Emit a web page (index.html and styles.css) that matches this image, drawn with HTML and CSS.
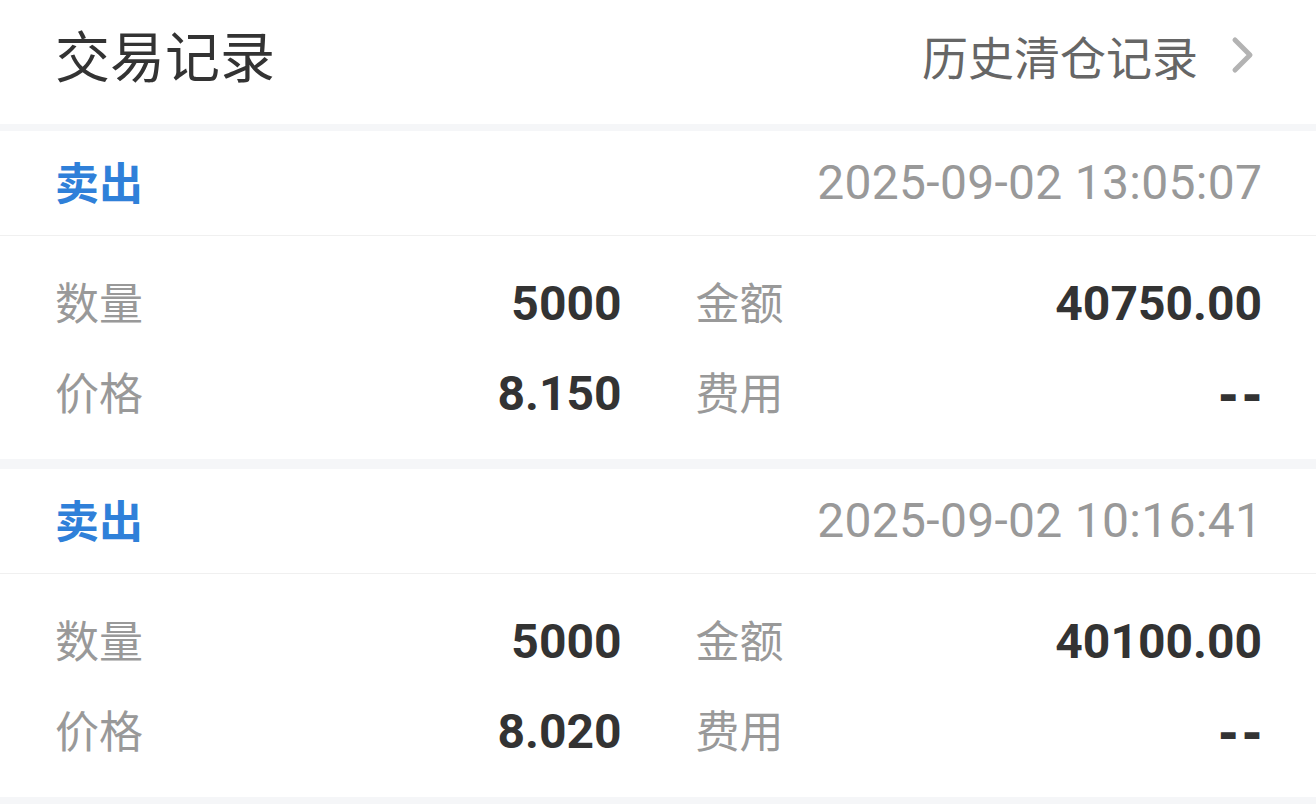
FILE: index.html
```html
<!DOCTYPE html>
<html lang="zh-CN">
<head>
    <meta charset="UTF-8">
    <meta name="viewport" content="width=device-width, initial-scale=1.0">
    <title>交易记录</title>
    <link rel="stylesheet" href="styles.css">
</head>
<body>
    <div class="page">
        <div class="header">
            <h1 class="title">交易记录</h1>
            <a class="history-link" href="#">
                <span>历史清仓记录</span>
                <svg class="chevron" width="24" height="38" viewBox="0 0 24 38">
                    <path d="M4 4 L19 19 L4 34" fill="none" stroke="#b3b3b3" stroke-width="5" stroke-linecap="round" stroke-linejoin="round"/>
                </svg>
            </a>
        </div>

        <div class="record">
            <div class="record-head">
                <span class="side">卖出</span>
                <span class="time">2025-09-02 13:05:07</span>
            </div>
            <div class="record-body">
                <div class="cell"><span class="label">数量</span><span class="value">5000</span></div>
                <div class="cell"><span class="label">金额</span><span class="value">40750.00</span></div>
                <div class="cell"><span class="label">价格</span><span class="value">8.150</span></div>
                <div class="cell"><span class="label">费用</span><span class="value dash">--</span></div>
            </div>
        </div>

        <div class="record">
            <div class="record-head">
                <span class="side">卖出</span>
                <span class="time">2025-09-02 10:16:41</span>
            </div>
            <div class="record-body">
                <div class="cell"><span class="label">数量</span><span class="value">5000</span></div>
                <div class="cell"><span class="label">金额</span><span class="value">40100.00</span></div>
                <div class="cell"><span class="label">价格</span><span class="value">8.020</span></div>
                <div class="cell"><span class="label">费用</span><span class="value dash">--</span></div>
            </div>
        </div>
    </div>
</body>
</html>
```

FILE: styles.css
```css
body {
    margin: 0;
    background-color: #f5f6f8;
    font-family: 'Noto Sans CJK SC', 'Noto Sans', sans-serif;
    color: #333;
}
.page {
    display: flex;
    flex-direction: column;
}
.header {
    height: 124px;
    padding: 0 55px 18px 55px;
    background-color: #ffffff;
    display: flex;
    justify-content: space-between;
    align-items: center;
    box-sizing: border-box;
    margin-bottom: 7px;
}
.title {
    margin: 0;
    font-size: 55px;
    font-weight: normal;
    line-height: 1;
    color: #333;
}
.history-link {
    display: flex;
    align-items: center;
    gap: 33px;
    font-size: 46px;
    line-height: 1;
    color: #666;
    text-decoration: none;
    margin-top: 4px;
    margin-right: 6px;
}
.chevron {
    display: block;
}
.record {
    background-color: #ffffff;
    margin-bottom: 10px;
}
.record-head {
    height: 104px;
    padding: 0 54px 0 55px;
    display: flex;
    justify-content: space-between;
    align-items: center;
    border-bottom: 1px solid #f0f0f0;
}
.side {
    font-size: 44px;
    font-weight: bold;
    color: #2f80d9;
    line-height: 1;
    margin-top: -4px;
}
.time {
    font-family: 'Roboto', 'Liberation Sans', sans-serif;
    font-size: 48px;
    letter-spacing: 0.3px;
    margin-right: -0.3px;
    color: #999;
    line-height: 1;
}
.record-body {
    display: grid;
    grid-template-columns: 1fr 1fr;
    column-gap: 74px;
    grid-auto-rows: 90px;
    padding: 23px 54px 20px 55px;
}
.cell {
    display: flex;
    justify-content: space-between;
    align-items: center;
}
.label {
    font-size: 44px;
    color: #999;
    line-height: 1;
    margin-top: -6px;
}
.value {
    font-family: 'Roboto', 'Liberation Sans', sans-serif;
    font-size: 48px;
    font-weight: bold;
    color: #333;
    line-height: 1;
}
.dash {
    font-family: 'DejaVu Sans', sans-serif;
    letter-spacing: 4px;
    margin-right: -4px;
}
```
